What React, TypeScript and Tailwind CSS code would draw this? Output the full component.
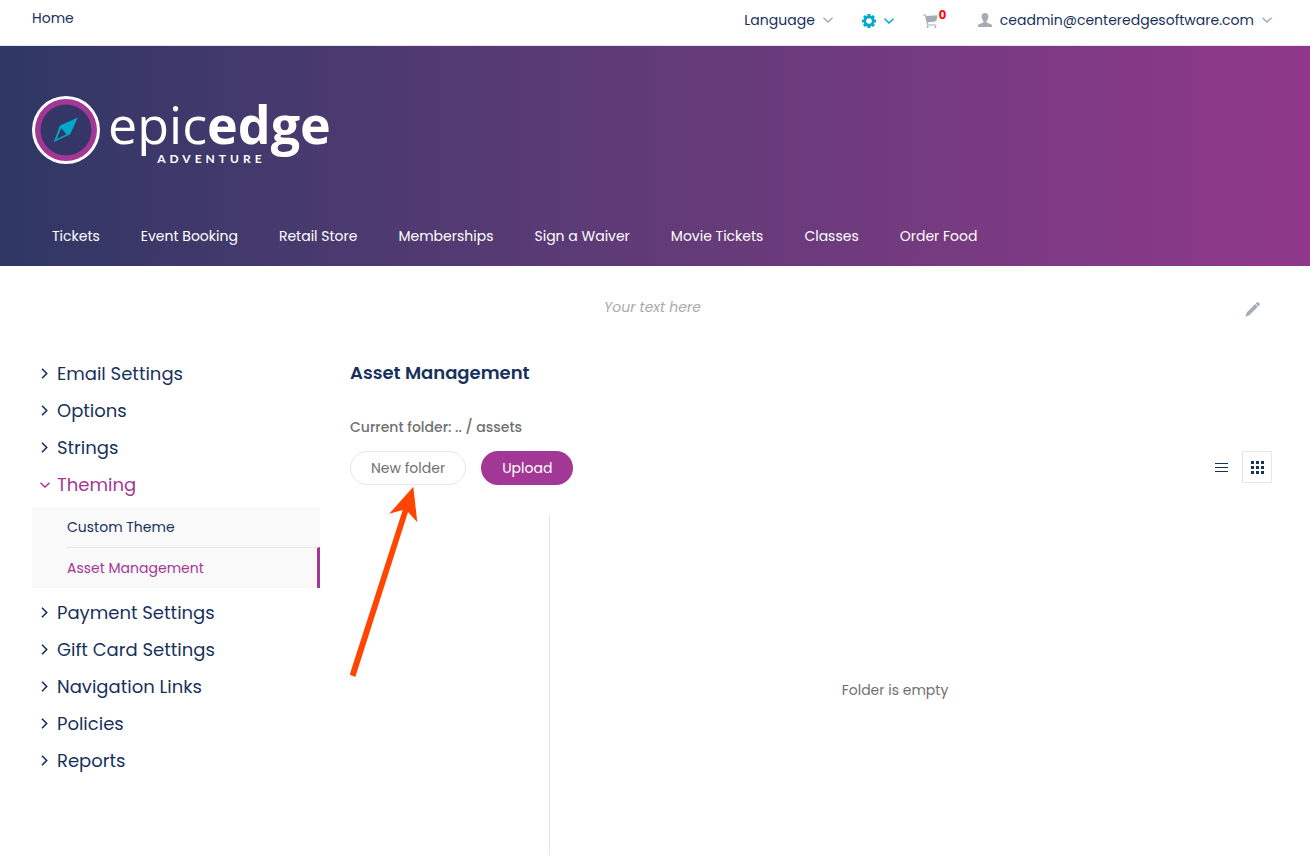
const navItems = [
  "Tickets",
  "Event Booking",
  "Retail Store",
  "Memberships",
  "Sign a Waiver",
  "Movie Tickets",
  "Classes",
  "Order Food",
];

const menuTop = ["Email Settings", "Options", "Strings"];
const menuBottom = ["Payment Settings", "Gift Card Settings", "Navigation Links", "Policies", "Reports"];

function ChevronDown({ className = "" }: { className?: string }) {
  return (
    <svg className={className} width="10" height="6" viewBox="0 0 10 6" fill="none" stroke="currentColor" strokeWidth="1.5">
      <path d="M0.5 0.7 5 5l4.5-4.3" />
    </svg>
  );
}

function ChevronRight() {
  return (
    <svg width="7" height="11" viewBox="0 0 7 11" fill="none" stroke="currentColor" strokeWidth="1.6">
      <path d="M1 0.8 5.7 5.5 1 10.2" />
    </svg>
  );
}

function GearIcon() {
  return (
    <svg width="14" height="14" viewBox="0 0 14 14">
      <g fill="#00a9c8">
        <rect x="5.4" y="0" width="3.2" height="14" rx="0.6" />
        <rect x="5.4" y="0" width="3.2" height="14" rx="0.6" transform="rotate(45 7 7)" />
        <rect x="5.4" y="0" width="3.2" height="14" rx="0.6" transform="rotate(90 7 7)" />
        <rect x="5.4" y="0" width="3.2" height="14" rx="0.6" transform="rotate(135 7 7)" />
        <circle cx="7" cy="7" r="5.4" />
      </g>
      <circle cx="7" cy="7" r="2.8" fill="#fff" />
    </svg>
  );
}

function CartIcon() {
  return (
    <svg width="15" height="14" viewBox="0 0 15 14" fill="#a3adb5">
      <path d="M0 0.4h2.700l.7 1.700L14.500 1.300 13.300 7.200 4.700 8.600l.3 1.900h8.400v1H4.200L2 1.500H0z" />
      <circle cx="4.600" cy="12.900" r="1" />
      <circle cx="12.400" cy="12.900" r="1" />
    </svg>
  );
}

function UserIcon() {
  return (
    <svg width="14" height="14" viewBox="0 0 14 14" fill="#a3adb5">
      <path d="M7 0C4.8 0 3.6 1.400 3.6 3.500c0 1.800.7 3.600 1.800 4.500v1.600C4.600 10.300.3 11 0 12.400V14h14v-1.600C13.700 11 9.400 10.300 8.600 9.600V8c1.100-.9 1.800-2.700 1.800-4.500C10.400 1.400 9.200 0 7 0z" />
    </svg>
  );
}

function Logo() {
  return (
    <a href="#" aria-label="epicedge adventure" className="flex items-start gap-2 text-white">
      <svg width="68" height="68" viewBox="0 0 68 68">
        <circle cx="34" cy="34" r="34" fill="#fff" />
        <circle cx="34" cy="34" r="31" fill="#a33795" />
        <circle cx="34" cy="34" r="25.5" fill="#343668" />
        <path
          fillRule="evenodd"
          d="M45.800 21.600 38.200 38.300 21.800 45.900 28 29.600zM29.200 32.300 24.600 43 34.600 38.300z"
          fill="#00a9c8"
        />
      </svg>
      <span className="flex flex-col items-center">
        <span className="font-['Open_Sans',sans-serif] text-[52px] leading-[56px] font-medium">
          epic<b className="font-bold">edge</b>
        </span>
        <span className="mt-px mr-4 font-[Lato,sans-serif] text-xs leading-3 font-bold tracking-[4px]">ADVENTURE</span>
      </span>
    </a>
  );
}

function MenuItem({ label }: { label: string }) {
  return (
    <li>
      <a href="#" className="flex h-[37px] items-center">
        <span className="flex w-[25px] justify-center">
          <ChevronRight />
        </span>
        {label}
      </a>
    </li>
  );
}

export default function App() {
  return (
    <div className="bg-white font-[Poppins,Inter,sans-serif] text-sm text-[#17315d]">
      {/* Top bar */}
      <div className="flex h-[46px] items-center border-b border-gray-200 pr-[38px] pb-2.5 pl-8">
        <a href="#">Home</a>
        <div className="mt-1 ml-auto flex items-center">
          <button className="flex items-center gap-2">
            Language <ChevronDown className="text-[#a3adb5]" />
          </button>
          <button aria-label="Settings" className="ml-[29px] flex items-center gap-2 pt-0.5 text-[#00a9c8]">
            <GearIcon />
            <ChevronDown />
          </button>
          <a href="#" aria-label="Cart" className="relative ml-[29px] pt-0.5">
            <CartIcon />
            <span className="absolute -top-1.5 left-4 font-['Open_Sans',sans-serif] text-[13px] leading-4 font-bold text-[#f00]">
              0
            </span>
          </a>
          <button className="ml-10 flex items-center gap-2">
            <UserIcon />
            ceadmin@centeredgesoftware.com
            <ChevronDown className="text-[#a3adb5]" />
          </button>
        </div>
      </div>

      {/* Header */}
      <header className="flex h-[220px] flex-col justify-between bg-linear-to-r from-[#2f3765] to-[#90388b] px-8 pt-[50px] pb-5">
        <div className="flex">
          <Logo />
        </div>
        <nav className="flex gap-[41px] px-5 leading-5 text-white">
          {navItems.map((item) => (
            <a key={item} href="#">
              {item}
            </a>
          ))}
        </nav>
      </header>

      {/* Editable text */}
      <div className="flex h-[82px] items-center pr-[50px] pl-8">
        <p className="grow pl-7 text-center text-[#aaa] italic">Your text here</p>
        <button aria-label="Edit text" className="pt-1">
          <svg width="15" height="15" viewBox="0 0 15 15" fill="#a3adb5">
            <path d="M10.700 1.500 11.700.6a1.500 1.500 0 0 1 2 0l.7.7a1.500 1.500 0 0 1 0 2l-1 1zM10.200 2l2.700 2.700-8.700 8.500L.4 14.700 1.700 10.500z" />
          </svg>
        </button>
      </div>

      <div className="flex gap-[30px] pr-[38px] pl-8">
        {/* Side menu */}
        <aside className="w-72 shrink-0 pt-[7px]">
          <ul className="text-lg">
            {menuTop.map((label) => (
              <MenuItem key={label} label={label} />
            ))}
            <li className="text-[#a33795]">
              <a href="#" className="flex h-[37px] items-center">
                <span className="flex w-[25px] justify-center">
                  <ChevronDown />
                </span>
                Theming
              </a>
              <ul className="mt-1 mb-1.5 bg-[#f9f9f9] pl-[35px] text-sm">
                <li>
                  <a href="#" className="flex h-10 items-center text-[#17315d]">
                    Custom Theme
                  </a>
                </li>
                <li>
                  <a href="#" className="flex h-[41px] items-center border-t border-r-3 border-t-gray-200 border-r-[#a33795]">
                    Asset Management
                  </a>
                </li>
              </ul>
            </li>
            {menuBottom.map((label) => (
              <MenuItem key={label} label={label} />
            ))}
          </ul>
        </aside>

        {/* Asset manager */}
        <main className="relative grow pt-[11px] text-[#707070]">
          <h1 className="text-lg leading-7 font-semibold text-[#17315d]">Asset Management</h1>
          <p className="mt-[30px] leading-5 font-medium">Current folder: .. / assets</p>
          <div className="mt-3.5 flex h-[34px] items-center">
            <button className="h-full rounded-full border border-gray-200 px-5">New folder</button>
            <button className="ml-[15px] h-full rounded-full bg-[#a33795] px-[21px] text-white">Upload</button>
            <div className="ml-auto flex items-center self-start text-[#17315d]">
              <button aria-label="List view" className="p-3.5 py-0">
                <svg width="13" height="9" viewBox="0 0 13 9" fill="currentColor">
                  <path d="M0 0h13v1H0zM0 4h13v1H0zM0 8h13v1H0z" />
                </svg>
              </button>
              <button aria-label="Grid view" className="flex h-8 w-[30px] items-center justify-center border border-gray-200">
                <svg width="13" height="13" viewBox="0 0 13 13" fill="currentColor">
                  <path d="M0 0h3v3H0zM5 0h3v3H5zM10 0h3v3h-3zM0 5h3v3H0zM5 5h3v3H5zM10 5h3v3h-3zM0 10h3v3H0zM5 10h3v3H5zM10 10h3v3h-3z" />
                </svg>
              </button>
            </div>
          </div>
          <div className="mt-[30px] flex h-[340px]">
            <div className="w-[200px] border-r border-gray-200" />
            <div className="flex grow items-center justify-center pt-2.5 pr-8">Folder is empty</div>
          </div>

          {/* Pointer to the New folder button */}
          <svg className="pointer-events-none absolute top-[138px] left-0" width="70" height="192" viewBox="0 0 70 192">
            <path d="M63.300.700 39.300 27.700 52.700 24 -.3 188.700 5.300 191 58 26 67.300 36.300z" fill="#ff4500" />
          </svg>
        </main>
      </div>
    </div>
  );
}
